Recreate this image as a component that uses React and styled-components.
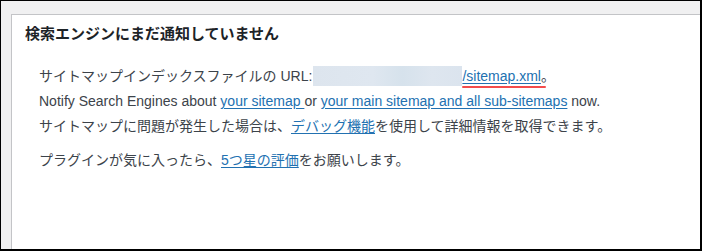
import React from "react";
import styled, { createGlobalStyle } from "styled-components";

const Global = createGlobalStyle`
  html, body { margin: 0; padding: 0; background: #fff; }
  body { font-family: "Liberation Sans", "Noto Sans CJK JP", sans-serif; }
  * { box-sizing: border-box; }
`;

const Frame = styled.div`
  width: 702px;
  height: 251px;
  overflow: hidden;
  border-style: solid;
  border-color: #000;
  border-width: 1px 2px 2px 1px;
  background: #f0f0f1;
  padding: 13px 0 0 10px;
`;

const Card = styled.section`
  width: calc(100% + 40px);
  height: 300px;
  background: #fff;
  border: 1px solid #c3c4c7;
  padding: 8px 13px;
  color: #3c434a;
`;

const Title = styled.h2`
  margin: 0;
  font-size: 15px;
  font-weight: 700;
  line-height: 20px;
  color: #1d2327;
  font-family: "Noto Sans CJK JP", sans-serif;
`;

const Body = styled.div`
  padding: 21px 0 0 14px;
  font-size: 14px;
  font-family: "Liberation Sans", "Noto Sans CJK JP", sans-serif;
`;

const Lines = styled.div`
  line-height: 25px;
`;

const Line = styled.div`
  white-space: nowrap;
`;

const Para = styled.p`
  margin: 9px 0 0;
  line-height: 25px;
`;

const Link = styled.a`
  color: #2271b1;
  text-decoration: underline;
  text-underline-offset: 2px;
  position: relative;
`;

const Marked = styled(Link)`
  &::after {
    content: "";
    position: absolute;
    left: 0;
    right: -5px;
    bottom: -4px;
    height: 2px;
    background: #f34c4c;
    border-radius: 1px;
  }
`;

const Blur = styled.span`
  display: inline-block;
  width: 149px;
  height: 20px;
  vertical-align: -5px;
  margin-left: 1px;
  background: linear-gradient(90deg, #dde5ee 0%, #dfe7f0 40%, #d6e2ec 60%, #dee6ef 80%, #dbe4ee 100%);
`;

export default function App() {
  return (
    <>
      <Global />
      <Frame>
        <Card>
          <Title>検索エンジンにまだ通知していません</Title>
          <Body>
            <Lines>
              <Line>
                サイトマップインデックスファイルの URL:<Blur />
                <Marked href="#">/sitemap.xml</Marked>。
              </Line>
              <Line>
                Notify Search Engines about <Link href="#">your sitemap </Link>or{" "}
                <Link href="#">your main sitemap and all sub-sitemaps</Link> now.
              </Line>
              <Line>
                サイトマップに問題が発生した場合は、<Link href="#">デバッグ機能</Link>を使用して詳細情報を取得できます。
              </Line>
            </Lines>
            <Para>
              プラグインが気に入ったら、<Link href="#">5つ星の評価</Link>をお願いします。
            </Para>
          </Body>
        </Card>
      </Frame>
    </>
  );
}
